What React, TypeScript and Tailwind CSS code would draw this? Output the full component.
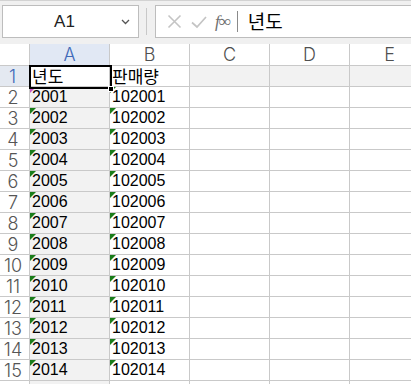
import React from "react";

const cols = ["A", "B", "C", "D", "E"];
const years = Array.from({ length: 14 }, (_, i) => 2001 + i);

function Flag({ pink }: { pink?: boolean }) {
  return (
    <span
      className={
        "absolute left-0 top-0 w-0 h-0 border-t-[6px] border-r-[6px] border-r-transparent " +
        (pink ? "border-t-[#c85ac8]" : "border-t-[#1a7d1a]")
      }
    />
  );
}

function Cell({
  children,
  gray,
  flag,
  pink,
}: {
  children?: React.ReactNode;
  gray?: boolean;
  flag?: boolean;
  pink?: boolean;
}) {
  return (
    <div
      className={
        "relative h-[21px] border-r border-b border-[#c9c9c9] pl-[2px] flex items-end pb-[1px] text-[16px] leading-[18px] text-black " +
        (gray ? "bg-[#f2f2f2]" : "bg-white")
      }
    >
      {flag && <Flag pink={pink} />}
      {children}
    </div>
  );
}

export default function App() {
  return (
    <div
      className="w-[411px] h-[384px] overflow-hidden bg-[#f0f0f0]"
      style={{ fontFamily: '"Liberation Sans", "Noto Sans CJK KR", sans-serif' }}
    >
      {/* Formula bar */}
      <div className="h-[44px] border-t border-[#d2d2d2] flex items-start pt-[4px] pl-[2px] gap-0">
        <div className="w-[137px] h-[33px] bg-white border border-[#bdbdbd] flex items-center relative">
          <span className="w-full text-center text-[17px] text-[#222] pr-[12px]">A1</span>
          <svg className="absolute right-[8px] top-[13px]" width="9" height="6" viewBox="0 0 9 6">
            <path d="M1 1 L4.5 4.5 L8 1" stroke="#555" strokeWidth="1.3" fill="none" />
          </svg>
        </div>
        <div className="w-[1px] h-[27px] bg-[#c8c8c8] mt-[3px] ml-[7px] mr-[8px]" />
        <div className="flex-1 h-[33px] bg-white border border-[#bdbdbd] border-r-0 flex items-center pl-[11px]">
          <svg width="15" height="15" viewBox="0 0 15 15">
            <path d="M1.5 1.5 L13.5 13.5 M13.5 1.5 L1.5 13.5" stroke="#c4c4c4" strokeWidth="1.6" />
          </svg>
          <svg className="ml-[9px]" width="16" height="14" viewBox="0 0 16 14">
            <path d="M1 7.5 L6 12 L15 2" stroke="#c4c4c4" strokeWidth="1.7" fill="none" />
          </svg>
          <span
            className="ml-[8px] text-[17px] italic text-[#6e6e6e] tracking-[-1px]"
            style={{ fontFamily: '"Liberation Serif", serif' }}
          >
            f∞
          </span>
          <div className="w-[1px] h-[21px] bg-[#8a8a8a] ml-[7px]" />
          <span className="ml-[10px] text-[19px] text-black" style={{ fontFamily: '"Noto Sans CJK KR", sans-serif' }}>
            년도
          </span>
        </div>
      </div>

      {/* Sheet grid */}
      <div className="relative bg-white grid grid-cols-[30px_80px_80px_80px_80px_80px]">
        {/* header row */}
        <div className="h-[22px] border-r border-b border-[#c9c9c9] bg-white" />
        {cols.map((c) => (
          <div
            key={c}
            className={
              "h-[22px] border-r border-b border-[#c9c9c9] flex items-center justify-center text-[18px] font-light " +
              (c === "A" ? "bg-[#e1e8f4] text-[#4169b8]" : "bg-white text-[#505050]")
            }
            style={{ fontFamily: "Inter, sans-serif" }}
          >
            {c}
          </div>
        ))}

        {/* row 1 */}
        <div
          className="h-[21px] border-r border-b border-[#c9c9c9] bg-[#e4e9f1] text-[#4169b8] text-[18px] font-light flex items-center justify-center pr-[4px]"
          style={{ fontFamily: "Inter, sans-serif" }}
        >
          1
        </div>
        <Cell>
          <span className="text-[17px]" style={{ fontFamily: '"Noto Sans CJK KR", sans-serif' }}>년도</span>
        </Cell>
        <Cell>
          <span className="text-[17px]" style={{ fontFamily: '"Noto Sans CJK KR", sans-serif' }}>판매량</span>
        </Cell>
        <Cell gray />
        <Cell gray />
        <Cell gray />

        {/* data rows */}
        {years.map((y, i) => (
          <React.Fragment key={y}>
            <div
              className="h-[21px] border-r border-b border-[#c9c9c9] bg-white text-[#555] text-[18px] font-light flex items-center justify-center pr-[3px]"
              style={{ fontFamily: "Inter, sans-serif" }}
            >
              {i + 2}
            </div>
            <Cell gray flag pink={i === 0}>
              {y}
            </Cell>
            <Cell flag>{100000 + y}</Cell>
            <Cell />
            <Cell />
            <Cell />
          </React.Fragment>
        ))}

        {/* row 16 (cut off) */}
        <div
          className="h-[21px] border-r border-b border-[#c9c9c9] bg-white text-[#555] text-[18px] font-light flex items-center justify-center pr-[3px]"
          style={{ fontFamily: "Inter, sans-serif" }}
        >
          16
        </div>
        <Cell gray />
        <Cell />
        <Cell />
        <Cell />
        <Cell />

        {/* active cell outline */}
        <div className="absolute left-[29px] top-[21px] w-[83px] h-[24px] border-2 border-black" />
        <div className="absolute left-[108px] top-[42px] w-[6px] h-[6px] bg-black border border-white" />
      </div>
    </div>
  );
}
